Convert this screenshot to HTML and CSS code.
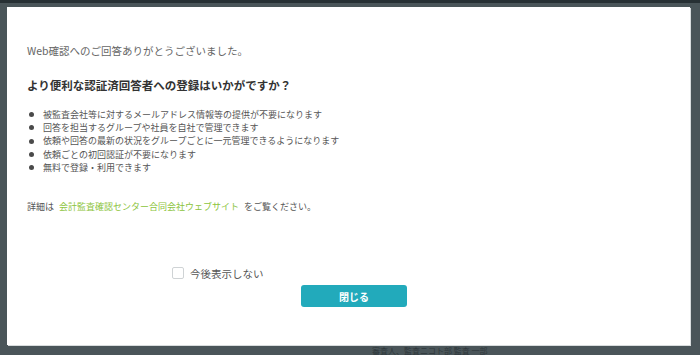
FILE: index.html
```html
<!DOCTYPE html>
<html lang="ja">
<head>
  <meta charset="UTF-8">
  <title>認証済回答者のご案内</title>
  <link rel="stylesheet" href="styles.css">
</head>
<body>
  <div class="topbar"></div>

  <!-- Registration dialog -->
  <div class="modal">
    <p class="thanks">Web確認へのご回答ありがとうございました。</p>
    <h2 class="title">より便利な認証済回答者への登録はいかがですか？</h2>
    <ul class="merits">
      <li>被監査会社等に対するメールアドレス情報等の提供が不要になります</li>
      <li>回答を担当するグループや社員を自社で管理できます</li>
      <li>依頼や回答の最新の状況をグループごとに一元管理できるようになります</li>
      <li>依頼ごとの初回認証が不要になります</li>
      <li>無料で登録・利用できます</li>
    </ul>
    <p class="detail">詳細は<a href="#" class="link">会計監査確認センター合同会社ウェブサイト</a>をご覧ください。</p>

    <div class="footer">
      <label class="hide-next">
        <input type="checkbox">
        <span class="box"></span>
        今後表示しない
      </label>
      <button class="btn">閉じる</button>
    </div>
  </div>

  <div class="behind">審査人、監査ニコト部 監査 一部</div>
</body>
</html>
```

FILE: styles.css
```css
* {
  margin: 0;
  padding: 0;
  box-sizing: border-box;
}

body {
  font-family: "Noto Sans CJK JP", "Noto Sans", sans-serif;
  background-color: #4a5559;
  width: 700px;
  height: 355px;
  overflow: hidden;
  color: #555;
}

.topbar {
  height: 3px;
  background-color: #273034;
}

.modal {
  margin: 4px 0 0 7px;
  width: 683px;
  height: 338px;
  background-color: #fff;
  padding: 36px 20px 0;
  box-shadow: 1px 1px 0 #d8dcdd;
}

.thanks {
  font-size: 10.5px;
  line-height: 16px;
  color: #666;
}

.title {
  margin-top: 17px;
  font-size: 11.5px;
  line-height: 18px;
  font-weight: 700;
  color: #333;
}

.merits {
  list-style: none;
  margin-top: 14px;
  font-size: 9px;
  line-height: 13.2px;
  color: #555;
}

.merits li {
  display: flex;
  align-items: center;
}

.merits li::before {
  content: "";
  width: 5px;
  height: 5px;
  border-radius: 50%;
  background-color: #4a4a4a;
  margin: 0 9px 0 2px;
  flex-shrink: 0;
}

.detail {
  margin-top: 26px;
  font-size: 9px;
  line-height: 13px;
  color: #555;
}

.link {
  color: #8cc43c;
  text-decoration: none;
  margin: 0 5px;
}

.footer {
  margin-top: 53px;
  display: flex;
  flex-direction: column;
}

.hide-next {
  display: flex;
  align-items: center;
  margin-left: 145px;
  height: 14px;
  font-size: 10.5px;
  color: #555;
  cursor: pointer;
}

.hide-next input {
  display: none;
}

.hide-next .box {
  width: 12px;
  height: 12px;
  border: 1px solid #cfd3d5;
  border-radius: 2px;
  margin-right: 6px;
}

.btn {
  margin: 5px 0 0 274px;
  width: 106px;
  height: 22px;
  border: none;
  border-radius: 3px;
  background-color: #22aabb;
  color: #fff;
  font-family: inherit;
  font-size: 10px;
  font-weight: 700;
  cursor: pointer;
}

.behind {
  margin: 1px 0 0 372px;
  font-size: 8px;
  line-height: 9px;
  color: #2f383c;
}
```
